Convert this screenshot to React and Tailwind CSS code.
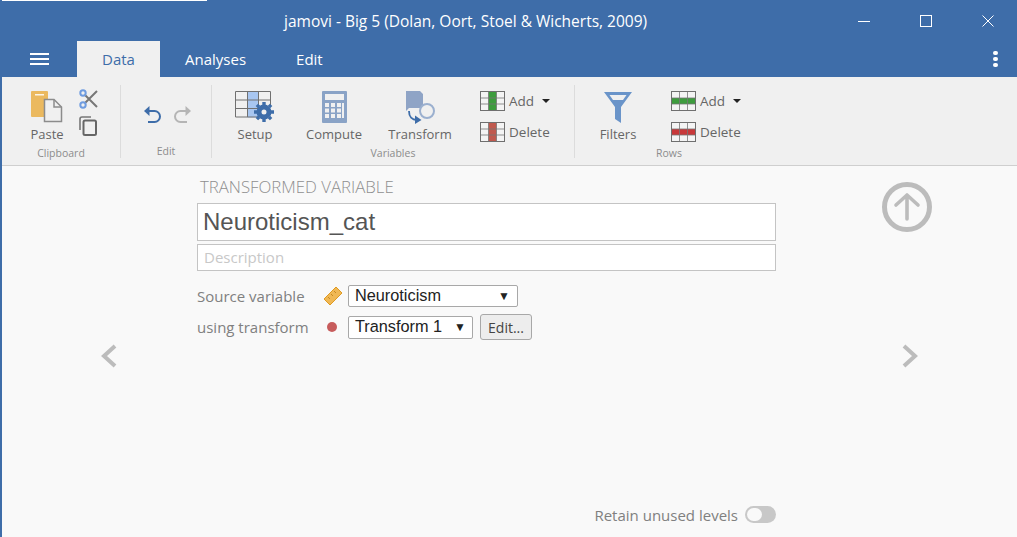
import React from 'react';

const ui = { fontFamily: '"Open Sans", "Noto Sans", sans-serif' };
const arial = { fontFamily: '"Liberation Sans", Arial, sans-serif' };

const TableIcon = ({ kind, color }) => (
  <svg width="25" height="20" viewBox="0 0 25 20" className="block">
    <rect x="0.5" y="0.5" width="24" height="19" fill="#f4f4f4" />
    {kind === 'col' ? (
      <rect x="8.5" y="0.5" width="8" height="19" fill={color} />
    ) : (
      <rect x="0.5" y="7" width="24" height="6" fill={color} />
    )}
    <path d="M8.5 0.5V19.5M16.5 0.5V19.5M0.5 7H24.5M0.5 13H24.5" stroke="#777" strokeWidth="1" fill="none" opacity={0.8} />
    <rect x="0.5" y="0.5" width="24" height="19" fill="none" stroke="#6f6f6f" />
  </svg>
);

const SmallAction = ({ kind, color, label, caret }) => (
  <div className="flex items-center h-[20px] text-[13.5px] text-[#666]">
    <TableIcon kind={kind} color={color} />
    <span className="ml-[4px] mt-[1px]">{label}</span>
    {caret && <span className="ml-[8px] w-0 h-0 border-x-[4px] border-x-transparent border-t-[4px] border-t-[#222]" />}
  </div>
);

const BigAction = ({ icon, label, className }) => (
  <div className={`flex flex-col items-center ${className}`}>
    <div className="h-[36px] flex items-start justify-center">{icon}</div>
    <span className="text-[13px] leading-[18px] text-[#666] mt-[4px]">{label}</span>
  </div>
);

const Group = ({ label, className, children, labelClass = '' }) => (
  <div className={`flex flex-col shrink-0 border-r border-[#dcdcdc] h-[73px] ${className}`}>
    <div className="flex flex-1">{children}</div>
    <div className={`text-[10.5px] leading-[10px] text-[#8c8c8c] text-center ${labelClass}`}>{label}</div>
  </div>
);

const PasteIcon = () => (
  <svg width="32" height="32" viewBox="0 0 32 32">
    <rect x="0" y="0" width="17" height="26" rx="1" fill="#ebb95f" />
    <rect x="4" y="3" width="9" height="1.5" fill="#fff" opacity="0.85" />
    <path d="M13.5 8.5H23L30.5 16V30.5H13.5Z" fill="#f0f0f0" stroke="#8c8c8c" strokeWidth="1.5" />
    <path d="M23 8.5V16H30.5" fill="none" stroke="#8c8c8c" strokeWidth="1.5" />
  </svg>
);

const ScissorsIcon = () => (
  <svg width="20" height="20" viewBox="0 0 20 20">
    <path d="M6 6L18 18M6 14L18 2" stroke="#777" strokeWidth="2" fill="none" />
    <circle cx="4" cy="4" r="2.7" fill="none" stroke="#6f9ce0" strokeWidth="2" />
    <circle cx="4" cy="16" r="2.7" fill="none" stroke="#6f9ce0" strokeWidth="2" />
  </svg>
);

const CopyIcon = () => (
  <svg width="18" height="20" viewBox="0 0 18 20">
    <path d="M1 14V3a2 2 0 0 1 2-2h9" fill="none" stroke="#777" strokeWidth="1.6" />
    <rect x="4.5" y="4.5" width="12.5" height="14.5" rx="1.5" fill="none" stroke="#666" strokeWidth="2" />
  </svg>
);

const UndoIcon = ({ color, flip }) => (
  <svg width="19" height="19" viewBox="0 0 19 19" className={flip ? '-scale-x-100' : ''}>
    <path d="M2 6H11.5a5.5 5.5 0 0 1 0 11H5" fill="none" stroke={color} strokeWidth="2" />
    <path d="M6.5 1L1 6l5.5 5z" fill={color} />
  </svg>
);

const SetupIcon = () => (
  <svg width="40" height="34" viewBox="0 0 40 34">
    <rect x="12.5" y="0.5" width="11" height="26" fill="#a8c6f0" />
    <path d="M0.5 0.5H35.5M0.5 9H35.5M0.5 17.5H30M0.5 26H24M0.5 0.5V26M12.5 0.5V26M23.5 0.5V26M35.5 0.5V14" stroke="#707070" strokeWidth="1" fill="none" />
    <g transform="translate(29 21)">
      <circle r="5" fill="none" stroke="#3e6da9" strokeWidth="5" />
      <path d="M0-10V-7M0 7V10M-10 0H-7M7 0H10M-7.1-7.1L-5-5M5 5L7.1 7.1M-7.1 7.1L-5 5M5-5L7.1-7.1" stroke="#3e6da9" strokeWidth="3.4" />
    </g>
  </svg>
);

const ComputeIcon = () => (
  <svg width="25" height="32" viewBox="0 0 25 32">
    <rect x="0" y="0" width="25" height="32" rx="1" fill="#8aa3c6" />
    <rect x="3" y="3" width="19" height="6" fill="#f0f0f0" />
    {[12, 17.5, 23].map((y) => [3, 9, 15].map((x) => (
      <rect key={`${x}-${y}`} x={x} y={y} width="4" height="4" fill="#f0f0f0" />
    )))}
    <rect x="20" y="12" width="2" height="15" fill="#f0f0f0" />
  </svg>
);

const TransformIcon = () => (
  <svg width="32" height="34" viewBox="0 0 32 34">
    <path d="M0 0H14L17 3V17H3L0 20Z" fill="#8fa4c6" />
    <circle cx="21" cy="20" r="7" fill="#f0f0f0" stroke="#9bb0cf" strokeWidth="2" />
    <path d="M3 20c0 6 3 9 8 9" fill="none" stroke="#3e6da9" strokeWidth="1.8" />
    <path d="M9 24.5L15.5 29L9 33Z" fill="#3e6da9" />
  </svg>
);

const FilterIcon = () => (
  <svg width="30" height="32" viewBox="0 0 30 32">
    <path d="M1 1H29L18 16V32L12 28V16Z" fill="#6a94c9" />
    <path d="M6.5 4H23.5L20 9H10Z" fill="#f0f0f0" />
  </svg>
);

const Chevron = ({ right }) => (
  <svg width="18" height="24" viewBox="0 0 18 24" className="block">
    <path d={right ? 'M3 2L14 12L3 22' : 'M15 2L4 12L15 22'} fill="none" stroke="#bcbcbc" strokeWidth="4" />
  </svg>
);

export default function App() {
  return (
    <div className="w-[1017px] h-[537px] overflow-hidden flex flex-col border-l-2 border-[#3e6da9] bg-[#f9f9f9]" style={ui}>
      {/* title bar */}
      <div className="bg-[#3e6da9] h-[41px] shrink-0">
        <div className="h-px w-[205px] bg-white" />
        <div className="flex items-center h-[40px] pt-[2px] text-white">
          <span className="ml-[282px] text-[15.5px] whitespace-nowrap">jamovi - Big 5 (Dolan, Oort, Stoel &amp; Wicherts, 2009)</span>
          <div className="ml-auto flex items-center mr-[23px] gap-[50px] mt-[-3px]">
            <svg width="12" height="12" viewBox="0 0 12 12"><path d="M0 6.5H12" stroke="#fff" /></svg>
            <svg width="12" height="12" viewBox="0 0 12 12"><rect x="0.5" y="0.5" width="11" height="11" fill="none" stroke="#fff" /></svg>
            <svg width="12" height="12" viewBox="0 0 12 12"><path d="M0.5 0.5L11.5 11.5M11.5 0.5L0.5 11.5" stroke="#fff" /></svg>
          </div>
        </div>
      </div>

      {/* tabs */}
      <div className="bg-[#3e6da9] h-[36px] shrink-0 flex items-center text-white text-[15px]">
        <div className="ml-[28px] w-[47px] flex flex-col gap-[3px]">
          <div className="w-[19px] h-[2px] bg-white" />
          <div className="w-[19px] h-[2px] bg-white" />
          <div className="w-[19px] h-[2px] bg-white" />
        </div>
        <div className="w-[83px] h-full bg-[#f0f0f0] text-[#3e6da9] flex items-center justify-center">Data</div>
        <span className="ml-[25px]">Analyses</span>
        <span className="ml-[50px]">Edit</span>
        <div className="ml-auto mr-[19px] flex flex-col gap-[2px]">
          <div className="w-[5px] h-[4px] rounded-full bg-white" />
          <div className="w-[5px] h-[4px] rounded-full bg-white" />
          <div className="w-[5px] h-[4px] rounded-full bg-white" />
        </div>
      </div>

      {/* ribbon */}
      <div className="bg-[#f0f0f0] h-[89px] shrink-0 border-b border-[#cfcfcf] flex pt-[8px]">
        <Group label="Clipboard" className="w-[119px]">
          <BigAction icon={<div className="pt-[6px]"><PasteIcon /></div>} label="Paste" className="ml-[29px] w-[32px]" />
          <div className="ml-[16px] flex flex-col gap-[7px] pt-[4px]">
            <ScissorsIcon />
            <CopyIcon />
          </div>
        </Group>
        <Group label="Edit" className="w-[91px]" labelClass="pb-[2px]">
          <div className="ml-[22px] mt-[20px] flex gap-[11px]">
            <UndoIcon color="#3e6da9" />
            <UndoIcon color="#b5b5b5" flip />
          </div>
        </Group>
        <Group label="Variables" className="w-[363px]">
          <BigAction icon={<div className="pt-[6px]"><SetupIcon /></div>} label="Setup" className="ml-[23px] w-[40px]" />
          <BigAction icon={<div className="pt-[6px]"><ComputeIcon /></div>} label="Compute" className="ml-[29px] w-[60px]" />
          <BigAction icon={<div className="pt-[6px] pl-[4px]"><TransformIcon /></div>} label="Transform" className="ml-[24px] w-[64px]" />
          <div className="ml-[28px] pt-[6px] flex flex-col gap-[11px]">
            <SmallAction kind="col" color="#3d9c3d" label="Add" caret />
            <SmallAction kind="col" color="#c0594e" label="Delete" />
          </div>
        </Group>
        <div className="flex flex-col h-[73px]">
          <div className="flex flex-1">
            <BigAction icon={<div className="pt-[6px]"><FilterIcon /></div>} label="Filters" className="ml-[24px] w-[38px]" />
            <div className="ml-[34px] pt-[6px] flex flex-col gap-[11px]">
              <SmallAction kind="row" color="#3d9c3d" label="Add" caret />
              <SmallAction kind="row" color="#c8383a" label="Delete" />
            </div>
          </div>
          <div className="text-[10.5px] leading-[10px] text-[#8c8c8c] pl-[81px]">Rows</div>
        </div>
      </div>

      {/* editor */}
      <div className="flex-1 flex min-h-0">
        <div className="w-[195px] shrink-0 pl-[98px] pt-[178px]">
          <Chevron />
        </div>
        <div className="w-[579px] shrink-0 flex flex-col">
          <div className="pl-[3px] pt-[11px] text-[16.8px] leading-[20px] text-[#8f8f8f] font-light whitespace-nowrap">TRANSFORMED VARIABLE</div>
          <div className="mt-[6px] h-[38px] bg-white border border-[#c4c4c4] flex items-center pl-[5px] text-[24px] text-[#555]" style={arial}>Neuroticism_cat</div>
          <div className="mt-[3px] h-[27px] bg-white border border-[#c4c4c4] flex items-center pl-[6px] text-[15px] text-[#c8c8c8]">Description</div>
          <div className="mt-[14px] h-[22px] flex items-center">
            <span className="w-[126px] text-[15px] text-[#808080] whitespace-nowrap">Source variable</span>
            <svg width="20" height="20" viewBox="0 0 20 20">
              <path d="M13 1L19 7L7 19L1 13Z" fill="#f0b855" stroke="#e09a20" strokeWidth="1" />
              <path d="M5 11L7 13M8 8L10 10M11 5L13 7" stroke="#c98a20" strokeWidth="1" />
            </svg>
            <div className="ml-[5px] w-[170px] h-[22px] bg-white border border-[#a8a8a8] rounded-[2px] flex items-center justify-between pl-[6px] pr-[7px] pb-[1px] text-[16.3px] text-[#222]" style={arial}>
              <span>Neuroticism</span>
              <span className="text-[12px]">▼</span>
            </div>
          </div>
          <div className="mt-[7px] flex items-center">
            <span className="w-[130px] text-[15px] text-[#808080] whitespace-nowrap">using transform</span>
            <span className="w-[10px] h-[10px] rounded-full bg-[#c75c5c]" />
            <div className="ml-[11px] w-[125px] h-[23px] bg-white border border-[#a8a8a8] rounded-[2px] flex items-center justify-between pl-[6px] pr-[6px] pb-[1px] text-[16.3px] text-[#222]" style={arial}>
              <span>Transform 1</span>
              <span className="text-[12px]">▼</span>
            </div>
            <div className="ml-[7px] w-[52px] h-[26px] bg-[#ededed] border border-[#a8a8a8] rounded-[3px] flex items-center justify-center text-[14px] text-[#444]">Edit...</div>
          </div>
          <div className="mt-auto mb-[11px] flex items-center justify-end text-[15px] text-[#808080]">
            <span>Retain unused levels</span>
            <div className="ml-[7px] w-[31px] h-[17px] rounded-full bg-[#c8c8c8] flex items-center pl-[2px]">
              <div className="w-[15px] h-[13px] rounded-full bg-[#f9f9f9]" />
            </div>
          </div>
        </div>
        <div className="flex-1 flex flex-col pl-[105px] pt-[15px]">
          <svg width="52" height="52" viewBox="0 0 52 52">
            <circle cx="26" cy="26" r="22.5" fill="none" stroke="#bcbcbc" strokeWidth="5" />
            <path d="M26 38V14M15 24L26 14L37 24" fill="none" stroke="#bcbcbc" strokeWidth="3.6" strokeLinecap="round" strokeLinejoin="round" />
          </svg>
          <div className="mt-[111px] pl-[20px]"><Chevron right /></div>
        </div>
      </div>
    </div>
  );
}
